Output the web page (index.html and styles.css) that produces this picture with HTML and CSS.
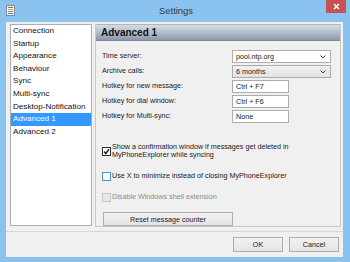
FILE: index.html
```
<!DOCTYPE html>
<html lang="en">
<head>
    <meta charset="UTF-8">
    <title>Settings</title>
    <link rel="stylesheet" href="styles.css">
</head>
<body>
    <div class="window">
        <div class="titlebar">
            <svg class="app-icon" width="9" height="11" viewBox="0 0 9 11">
                <rect x="0.5" y="0.5" width="8" height="10" fill="#f4f4f4" stroke="#7a8da8"/>
                <rect x="2" y="2" width="5" height="1" fill="#e04a3a"/>
                <rect x="2" y="4" width="5" height="1" fill="#f0a020"/>
                <rect x="2" y="6" width="5" height="1" fill="#5cb040"/>
                <rect x="2" y="8" width="5" height="1" fill="#3a7ad8"/>
            </svg>
            <span class="title">Settings</span>
            <span class="close">
                <svg width="7" height="7" viewBox="0 0 7 7">
                    <path d="M1 1L6 6M6 1L1 6" stroke="#fff" stroke-width="1.6"/>
                </svg>
            </span>
        </div>
        <div class="client">
            <div class="main">
                <ul class="nav">
                    <li>Connection</li>
                    <li>Startup</li>
                    <li>Appearance</li>
                    <li>Behaviour</li>
                    <li>Sync</li>
                    <li>Multi-sync</li>
                    <li>Desktop-Notification</li>
                    <li class="active">Advanced 1</li>
                    <li>Advanced 2</li>
                </ul>
                <div class="panel">
                    <div class="panel-head">Advanced 1</div>
                    <div class="fields">
                        <span class="field-label">Time server:</span>
                        <div class="combo combo-edit">
                            <span>pool.ntp.org</span>
                            <svg width="6" height="4" viewBox="0 0 6 4"><path d="M0.5 0.5L3 3L5.5 0.5" fill="none" stroke="#444" stroke-width="1"/></svg>
                        </div>
                        <span class="field-label">Archive calls:</span>
                        <div class="combo combo-list">
                            <span>6 months</span>
                            <svg width="6" height="4" viewBox="0 0 6 4"><path d="M0.5 0.5L3 3L5.5 0.5" fill="none" stroke="#444" stroke-width="1"/></svg>
                        </div>
                        <span class="field-label">Hotkey for new message:</span>
                        <div class="textbox">Ctrl + F7</div>
                        <span class="field-label">Hotkey for dial window:</span>
                        <div class="textbox">Ctrl + F6</div>
                        <span class="field-label">Hotkey for Multi-sync:</span>
                        <div class="textbox">None</div>
                    </div>
                    <div class="check check-multi">
                        <span class="box box-checked">
                            <svg width="7" height="7" viewBox="0 0 7 7"><path d="M1 3.5L2.8 5.5L6 1.2" fill="none" stroke="#222" stroke-width="1.5"/></svg>
                        </span>
                        <span>Show a confirmation window if messages get deleted in<br>MyPhoneExplorer while syncing</span>
                    </div>
                    <div class="check check-two">
                        <span class="box box-hover"></span>
                        <span>Use X to minimize instead of closing MyPhoneExplorer</span>
                    </div>
                    <div class="check check-three disabled">
                        <span class="box box-disabled"></span>
                        <span>Disable Windows shell extension</span>
                    </div>
                    <button class="btn reset">Reset message counter</button>
                </div>
            </div>
            <div class="footer">
                <button class="btn">OK</button>
                <button class="btn">Cancel</button>
            </div>
        </div>
    </div>
</body>
</html>
```

FILE: styles.css
```
body {
    margin: 0;
    font-family: 'Liberation Sans', Arial, sans-serif;
    background: #8bc3f0;
}
.window {
    width: 350px;
    height: 262px;
    background: #8bc3f0;
    display: flex;
    flex-direction: column;
}
.titlebar {
    height: 22px;
    display: grid;
    grid-template-columns: 1fr auto 1fr;
    padding: 0 4px 0 6px;
}
.app-icon {
    align-self: center;
    margin-top: -1px;
}
.title {
    align-self: center;
    font-size: 9.4px;
    color: #2f3a45;
    margin-top: -2px;
}
.close {
    justify-self: end;
    width: 20px;
    height: 13px;
    background: #c75050;
    display: flex;
    align-items: center;
    justify-content: center;
}
.client {
    flex: 1;
    margin: 0 7px 5px 6px;
    background: #f0f0f0;
    display: flex;
    flex-direction: column;
}
.main {
    display: flex;
    gap: 3px;
    padding: 2px 2px 0 4px;
    height: 203px;
}
.nav {
    list-style: none;
    margin: 0;
    padding: 0;
    width: 80px;
    height: 200px;
    background: #fff;
    border: 1px solid #adadad;
    font-size: 8.1px;
    color: #111;
}
.nav li {
    height: 12.6px;
    line-height: 12.6px;
    padding-left: 2px;
    white-space: nowrap;
}
.nav li.active {
    background: #3399ff;
    color: #fff;
}
.panel {
    flex: 1;
    border: 1px solid #c9c9c9;
    border-top-color: #b5b5b5;
    display: flex;
    flex-direction: column;
    align-items: flex-start;
    padding: 0 0 0 6px;
    font-size: 7.2px;
    color: #1a1a1a;
}
.panel-head {
    align-self: stretch;
    margin: 0 0 0 -6px;
    height: 15px;
    padding-left: 5px;
    display: flex;
    align-items: center;
    background: linear-gradient(#d6dde6, #b2bdca 50%, #8a98aa);
    border-bottom: 1px solid #7d8a9b;
    font-size: 10px;
    font-weight: bold;
    color: #111;
}
.fields {
    display: grid;
    grid-template-columns: 130px auto;
    grid-auto-rows: 13px;
    row-gap: 2px;
    margin-top: 9px;
    align-items: center;
}
.field-label {
    color: #1a1a1a;
    margin-top: -3px;
}
.combo {
    width: 96px;
    height: 11px;
    border: 1px solid #acacac;
    display: flex;
    align-items: center;
    justify-content: space-between;
    padding: 0 4px 0 3px;
    box-sizing: content-box;
}
.combo-edit {
    width: 90px;
    background: #fff;
}
.combo-list {
    width: 90px;
    background: linear-gradient(#f0f0f0, #e3e3e3);
}
.textbox {
    width: 52px;
    height: 11px;
    line-height: 11px;
    padding-left: 3px;
    background: #fff;
    border: 1px solid #acacac;
}
.check {
    display: flex;
    align-items: center;
    gap: 1px;
    line-height: 8px;
}
.check-multi {
    margin-top: 20px;
}
.check-two {
    margin-top: 12px;
    height: 10px;
}
.check-three {
    margin-top: 11px;
    height: 10px;
}
.disabled {
    color: #8a8a8a;
}
.box {
    width: 7px;
    height: 7px;
    border: 1px solid #333;
    background: #fff;
    display: flex;
    align-items: center;
    justify-content: center;
    flex: none;
}
.box-hover {
    border-color: #4f92d8;
}
.box-disabled {
    border-color: #c6c6c6;
    background: #e8e8e8;
}
.btn {
    font-family: inherit;
    font-size: 7.2px;
    color: #1a1a1a;
    height: 15px;
    padding: 0;
    background: linear-gradient(#f2f2f2, #e4e4e4);
    border: 1px solid #adadad;
}
.reset {
    width: 130px;
    height: 14px;
    margin: 10px 0 0 1px;
}
.footer {
    margin-top: 4px;
    border-top: 1px solid #d6d6d6;
    display: flex;
    justify-content: flex-end;
    gap: 6px;
    padding: 5px 4px 0 0;
}
.footer .btn {
    width: 50px;
}
```
